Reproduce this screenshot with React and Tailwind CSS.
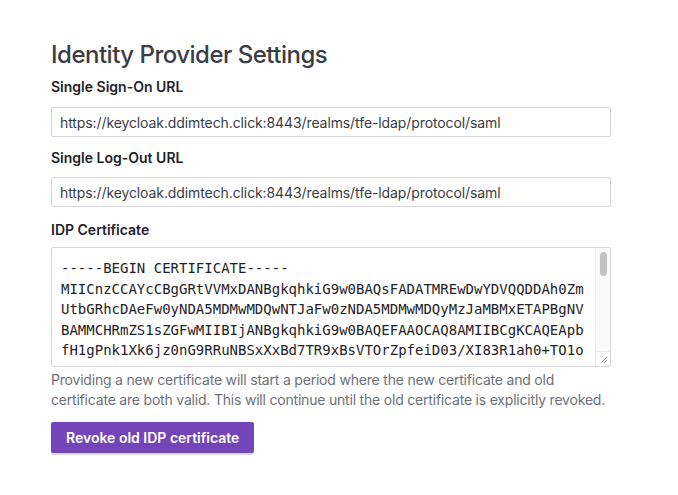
import React from "react";

export default function App() {
  const certLines = [
    "-----BEGIN CERTIFICATE-----",
    "MIICnzCCAYcCBgGRtVVMxDANBgkqhkiG9w0BAQsFADATMREwDwYDVQQDDAh0Zm",
    "UtbGRhcDAeFw0yNDA5MDMwMDQwNTJaFw0zNDA5MDMwMDQyMzJaMBMxETAPBgNV",
    "BAMMCHRmZS1sZGFwMIIBIjANBgkqhkiG9w0BAQEFAAOCAQ8AMIIBCgKCAQEApb",
    "fH1gPnk1Xk6jz0nG9RRuNBSxXxBd7TR9xBsVTOrZpfeiD03/XI83R1ah0+TO1o",
  ];
  const url = "https://keycloak.ddimtech.click:8443/realms/tfe-ldap/protocol/saml";

  return (
    <div className="min-h-screen bg-white font-['Inter',sans-serif] text-[#1f2229]">
      <div className="w-[560px] ml-[51px] pt-[39px]">
        <h1 className="text-[24px] leading-[32px] font-medium text-[#3b3d45] tracking-[-0.5px]">
          Identity Provider Settings
        </h1>

        {/* Sign-on */}
        <label className="block mt-[6px] text-[14px] leading-[20px] font-semibold">Single Sign-On URL</label>
        <div className="mt-[10px] h-[30px] border border-[#d5d7dc] rounded-[2px] flex items-center px-[8px] text-[14px] text-[#3a3d45] tracking-[-0.1px]">
          {url}
        </div>

        {/* Log-out */}
        <label className="block mt-[11px] text-[14px] leading-[20px] font-semibold">Single Log-Out URL</label>
        <div className="mt-[9px] h-[30px] border border-[#d5d7dc] rounded-[2px] flex items-center px-[8px] text-[14px] text-[#3a3d45] tracking-[-0.1px]">
          {url}
        </div>

        {/* Certificate */}
        <label className="block mt-[13px] text-[14px] leading-[20px] font-semibold">IDP Certificate</label>
        <div className="mt-[7px] h-[120px] border border-[#d5d7dc] rounded-[2px] flex overflow-hidden">
          <div className="flex-1 pl-[9px] pt-[10px] font-['DejaVu_Sans_Mono',monospace] text-[14px] leading-[20.5px] text-[#1f2229] whitespace-pre overflow-hidden">
            {certLines.map((l, i) => (
              <div key={i}>{l}</div>
            ))}
          </div>
          <div className="w-[15px] border-l border-[#ececec] bg-[#fafafa] flex flex-col">
            <div className="flex-1 pt-[4px] flex justify-center">
              <div className="w-[7px] h-[24px] rounded-full bg-[#c2c2c2]" />
            </div>
            <div className="h-[15px] border-t border-[#ececec] bg-white flex items-end justify-end p-[2px]">
              <svg width="8" height="8" viewBox="0 0 8 8">
                <path d="M7 1L1 7M7 4L4 7" stroke="#9a9a9a" strokeWidth="1" fill="none" />
              </svg>
            </div>
          </div>
        </div>

        <p className="mt-[3px] w-[566px] text-[14px] leading-[20px] text-[#6e717a] tracking-[-0.2px]">
          Providing a new certificate will start a period where the new certificate and old certificate are both valid. This will continue until the old certificate is explicitly revoked.
        </p>

        <button className="mt-[12px] h-[31px] px-[15px] rounded-[2px] bg-[#7444b9] text-white text-[14px] font-semibold shadow-[0_2px_0_#d8d9de]">
          Revoke old IDP certificate
        </button>
      </div>
    </div>
  );
}
